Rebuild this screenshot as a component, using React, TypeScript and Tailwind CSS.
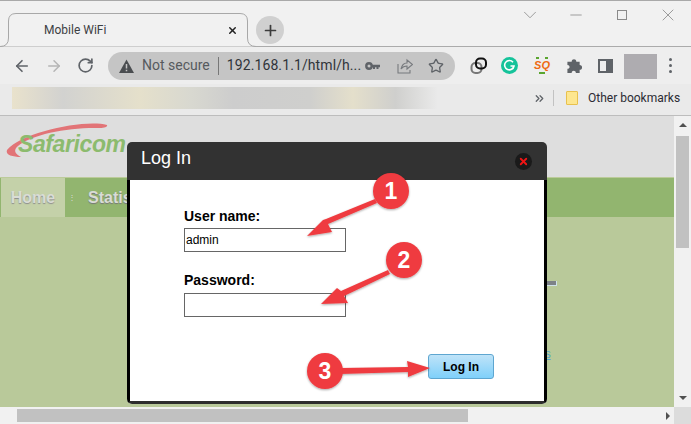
import React from "react";
import { ArrowLeft, ArrowRight, RotateCw, Plus, X, Star, ChevronDown, Minus, ChevronsRight } from "lucide-react";

function Annot() {
  return (
    <svg className="absolute left-0 top-0 pointer-events-none" width="691" height="424" viewBox="0 0 691 424">
      <defs>
        <filter id="sh" x="-20%" y="-20%" width="140%" height="140%">
          <feDropShadow dx="0" dy="1" stdDeviation="0.8" floodColor="#000" floodOpacity="0.35" />
        </filter>
      </defs>
      <g fill="#ef3b3f" filter="url(#sh)">
        <polygon points="375,199 377,203 328,224 332,232 307,236 323,220 326,219" />
        <circle cx="391" cy="191" r="18" />
        <polygon points="388,270 390,274 344,296 348,303 321,304 337,288 341,291" />
        <circle cx="404" cy="260" r="18" />
        <polygon points="340,368 408,367 407,361 430,368 408,377 408,372 340,374" />
        <circle cx="325" cy="371" r="18" />
      </g>
      <g fill="#ffffff" fontFamily="'Liberation Sans', sans-serif" fontWeight="700" fontSize="23" textAnchor="middle">
        <text x="391" y="199">1</text>
        <text x="404" y="268">2</text>
        <text x="325" y="379">3</text>
      </g>
    </svg>
  );
}

function Tab() {
  return (
    <div className="relative flex h-[34px] w-[256px] items-center pl-[44px] pr-[18px]">
      <svg className="absolute left-0 top-0" width="256" height="34" viewBox="0 0 256 34">
        <path d="M0 33.5 Q8.5 33.5 8.5 25 L8.5 8 Q8.5 0.5 16 0.5 L240 0.5 Q247.5 0.5 247.5 8 L247.5 25 Q247.5 33.5 256 33.5" fill="#f1f1f1" stroke="#a8a8a8" />
      </svg>
      <span className="relative flex-1 text-[12px] text-[#3c4043]">Mobile WiFi</span>
      <X size={11} strokeWidth={3.2} className="relative text-[#222]" />
    </div>
  );
}

function TitleBar() {
  return (
    <div className="flex h-[47px] items-end border-t border-b border-t-[#a9a9a9] border-b-[#ababab] bg-[#f1f1f1]">
      <div className="-mb-px flex items-center">
        <Tab />
        <div className="flex h-[28px] w-[28px] items-center justify-center rounded-full bg-[#d0d0d0]">
          <Plus size={17} strokeWidth={2.4} className="text-[#3c3c3c]" />
        </div>
      </div>
      <div className="ml-auto flex self-start text-[#8a8a8a]">
        <div className="flex h-[28px] w-[46px] items-center justify-center"><ChevronDown size={22} strokeWidth={0.9} /></div>
        <div className="flex h-[28px] w-[46px] items-center justify-center"><Minus size={18} strokeWidth={1.1} /></div>
        <div className="flex h-[28px] w-[46px] items-center justify-center"><span className="h-[10px] w-[10px] border border-[#8a8a8a]" /></div>
        <div className="flex h-[28px] w-[46px] items-center justify-center"><X size={20} strokeWidth={1} /></div>
      </div>
    </div>
  );
}

function Toolbar() {
  return (
    <div className="flex h-[37px] items-center bg-[#eeeeee] pl-[13px]">
      <ArrowLeft size={18} strokeWidth={2.2} className="text-[#5f6368]" />
      <ArrowRight size={18} strokeWidth={2} className="ml-[14px] text-[#b5b5b5]" />
      <RotateCw size={17} strokeWidth={2.4} className="ml-[14px] text-[#5f6368]" />
      <div className="ml-[14px] flex h-[28px] w-[347px] items-center rounded-full bg-[#c5c5c5] pl-[11px] font-['Roboto',sans-serif] text-[14px]">
        <svg width="15" height="14" viewBox="0 0 15 14">
          <path d="M7.5 0.5 L15 14 H0 Z" fill="#4a4d50" />
          <path d="M7.5 5 V9.5 M7.5 10.8 V12.2" stroke="#c5c5c5" strokeWidth="1.5" />
        </svg>
        <span className="ml-[8px] text-[#565a5e]">Not secure</span>
        <span className="mx-[8px] h-[18px] w-px bg-[#777]" />
        <span className="flex-1 tracking-[0.1px] text-[#30343a]">192.168.1.1/html/h...</span>
        <svg width="15" height="8" viewBox="0 0 15 8">
          <circle cx="4" cy="4" r="2.7" fill="none" stroke="#5f6368" strokeWidth="2.4" />
          <path d="M6 2.8 H15 V5.2 H13.5 V7 H11.5 V5.2 H10 V7 H8 V5.2 H6 Z" fill="#5f6368" />
        </svg>
        <svg width="16" height="16" viewBox="0 0 16 16" fill="none" stroke="#777a7e" strokeWidth="1.1" className="ml-[17px]">
          <path d="M1 6 V15 H13 V12" />
          <path d="M4 11 C5 6.5 7.5 5 10 5 V2 L15.5 6.5 L10 11 V8 C7.5 8 5.5 9 4 11 Z" />
        </svg>
        <Star size={16} strokeWidth={2} className="ml-[15px] mr-[11px] text-[#5f6368]" />
      </div>
      <svg width="18" height="18" viewBox="0 0 18 18" className="ml-[15px]" fill="none">
        <rect x="1.5" y="6" width="10" height="10" rx="4" stroke="#777" strokeWidth="2" />
        <rect x="6" y="1.5" width="10" height="10" rx="4" stroke="#111" strokeWidth="2" />
      </svg>
      <svg width="17" height="17" viewBox="0 0 17 17" className="ml-[13px]" fill="none">
        <circle cx="8.5" cy="8.5" r="8.5" fill="#15c39a" />
        <path d="M12 5.2 A4.7 4.7 0 1 0 13 9 H9.5" stroke="#fff" strokeWidth="1.6" />
      </svg>
      <div className="relative ml-[16px] flex h-[17px] w-[16px] items-center justify-center">
        <span className="absolute left-[2px] top-0 h-[2px] w-[3px] bg-[#5aa52f]" />
        <span className="absolute right-[2px] top-0 h-[2px] w-[3px] bg-[#5aa52f]" />
        <span className="absolute bottom-0 left-[5px] h-[2px] w-[6px] bg-[#5aa52f]" />
        <span className="font-['Liberation_Sans',sans-serif] text-[11px] font-bold italic leading-none text-[#ef6a12]">SQ</span>
      </div>
      <svg width="16" height="16" viewBox="0 0 17 17" className="ml-[16px]">
        <path d="M1.5 4 H6 C6 0.5 11 0.5 11 4 H14.5 V7.5 C18 7.5 18 12.5 14.5 12.5 V16 H10.5 C10.5 12.8 6 12.8 6 16 H1.5 V11.5 C4.5 11.5 4.5 7.5 1.5 7.5 Z" fill="#5f6368" />
      </svg>
      <div className="ml-[16px] flex h-[14px] w-[15px] justify-end border-[2.5px] border-[#5f6368]">
        <span className="w-[5px] bg-[#5f6368]" />
      </div>
      <div className="ml-[11px] mt-[2px] h-[25px] w-[33px] bg-[#aeacb0]" />
      <div className="ml-[12px] flex flex-col gap-[3px]">
        <span className="h-[3px] w-[3px] rounded-full bg-[#5f6368]" />
        <span className="h-[3px] w-[3px] rounded-full bg-[#5f6368]" />
        <span className="h-[3px] w-[3px] rounded-full bg-[#5f6368]" />
      </div>
    </div>
  );
}

function Bookmarks() {
  return (
    <div className="flex h-[32px] items-center border-b border-[#bdbdbd] bg-[#eaeaea] pb-[3px] pl-[12px] font-['Roboto',sans-serif]">
      <div className="h-[22px] w-[426px] bg-[linear-gradient(90deg,#e9e2cc_0%,#d2d2d0_12%,#e5e0cb_30%,#d8d8d0_42%,#cdcdcd_52%,#cfcfcd_70%,#e4dfcb_80%,#cfcfcd_90%,#eaeaea_100%)]" />
      <ChevronsRight size={13} strokeWidth={2.4} className="ml-[95px] text-[#5f6368]" />
      <span className="ml-[7px] h-[16px] w-px bg-[#c2c2c2]" />
      <span className="ml-[12px] h-[14px] w-[12px] rounded-[1px] border border-[#e8c14e] bg-[#fde68f]" />
      <span className="ml-[10px] text-[12px] text-[#2b2b33]">Other bookmarks</span>
    </div>
  );
}

function Logo() {
  return (
    <div className="relative h-[61px] bg-[#dedede]">
      <svg className="absolute left-0 top-0" width="120" height="50" viewBox="0 0 120 50">
        <path d="M107 9 C85 3 22 16 7 34 C5 39 13 41 21 41 C15 38 13 34 18 30 C32 18 70 11 100 12 C104 12 108 11 107 9 Z" fill="#e27477" />
      </svg>
      <span className="absolute left-[18px] top-[12px] font-['Liberation_Sans',sans-serif] text-[23px] font-bold italic leading-[32px] tracking-[-0.4px] text-[#8cbb6e]">Safaricom</span>
    </div>
  );
}

function Nav() {
  return (
    <div className="flex h-[40px] items-stretch border-t border-[#bccb9a] bg-[#92b56f] pl-[1px] font-['Liberation_Sans',sans-serif] text-[16px] font-bold text-[#d9dcd5]">
      <div className="flex w-[64px] items-center justify-center bg-[#c4d1a9] [text-shadow:0_1px_1px_#8d8d8d]">Home</div>
      <span className="ml-[3px] self-center text-[8px] font-normal">⋮</span>
      <span className="ml-[12px] self-center [text-shadow:0_1px_1px_#777]">Statistics</span>
    </div>
  );
}

function Modal() {
  return (
    <div className="absolute left-[127px] top-[26px] flex h-[262px] w-[420px] flex-col overflow-hidden rounded-[5px] font-['Liberation_Sans',sans-serif]">
      <div className="flex h-[38px] shrink-0 items-center justify-between bg-[#323232] pl-[14px] pr-[15px]">
        <span className="pb-[5px] text-[18px] text-white">Log In</span>
        <div className="flex h-[17px] w-[17px] items-center justify-center rounded-full bg-[#1a1a1a]">
          <X size={11} strokeWidth={4} className="text-[#f01515]" />
        </div>
      </div>
      <div className="relative flex-1 border-x-[3px] border-b-[3px] border-x-black border-b-[#2d2d2d] bg-white pl-[54px] pt-[28px]">
        <div className="text-[14px] font-bold leading-[16px] text-black">User name:</div>
        <div className="mt-[4px] flex h-[24px] w-[162px] items-center border border-[#666] pl-[1px] text-[12px] text-black">admin</div>
        <div className="mt-[20px] text-[14px] font-bold leading-[16px] text-black">Password:</div>
        <div className="mt-[5px] h-[24px] w-[162px] border border-[#666]" />
        <div className="absolute bottom-[22px] right-[50px] flex h-[25px] w-[66px] items-center justify-center rounded-[3px] border border-[#5ea6d0] bg-[linear-gradient(#bfe3f8,#7fd0fa)] text-[12px] font-bold text-black">Log In</div>
      </div>
    </div>
  );
}

function VScroll() {
  return (
    <div className="flex w-[17px] shrink-0 flex-col items-center bg-[#f1f1f1]">
      <span className="mt-[7px] h-0 w-0 border-x-[4px] border-b-[4px] border-x-transparent border-b-[#505050]" />
      <div className="mt-[9px] h-[112px] w-[13px] bg-[#c1c1c1]" />
      <span className="mb-[7px] mt-auto h-0 w-0 border-x-[4px] border-t-[4px] border-x-transparent border-t-[#505050]" />
    </div>
  );
}

function HScroll() {
  return (
    <div className="flex h-[17px] shrink-0 items-center bg-[#f1f1f1]">
      <div className="ml-[17px] h-[13px] w-[451px] bg-[#c1c1c1]" />
      <span className="ml-auto mr-[4px] h-0 w-0 border-y-[4px] border-l-[4px] border-y-transparent border-l-[#505050]" />
      <div className="h-full w-[17px] bg-[#dcdcdc]" />
    </div>
  );
}

export default function App() {
  return (
    <div className="relative flex h-[424px] w-[691px] flex-col overflow-hidden font-['Roboto',sans-serif]">
      <TitleBar />
      <Toolbar />
      <Bookmarks />
      <div className="flex min-h-0 flex-1">
        <div className="relative flex min-w-0 flex-1 flex-col bg-[#b9c99a]">
          <Logo />
          <Nav />
          <div className="absolute left-[544px] top-[165px] h-[5px] w-[13px] border-r border-b border-[#cfe3ea] bg-[#7d8288]" />
          <span className="absolute left-[538px] top-[231px] font-['Liberation_Sans',sans-serif] text-[12px] leading-[14px] text-[#4ea6cf] underline">es</span>
          <Modal />
        </div>
        <VScroll />
      </div>
      <HScroll />
      <Annot />
    </div>
  );
}
